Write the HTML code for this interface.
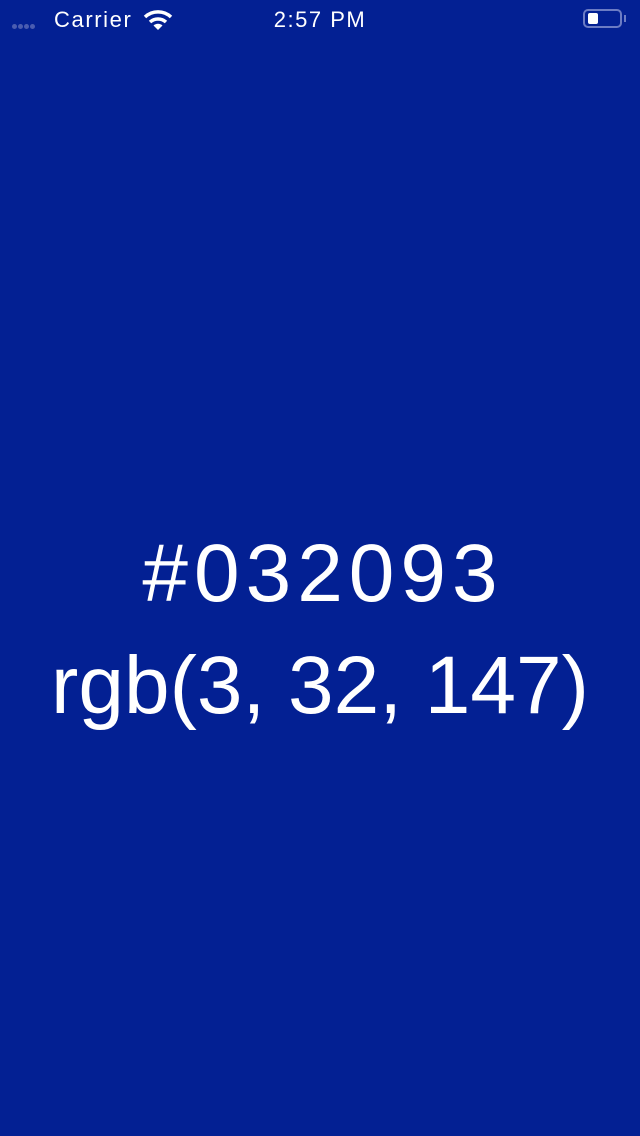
<!DOCTYPE html>
<html><head><style>
html,body{margin:0;padding:0;width:640px;height:1136px;background:#032093;overflow:hidden;font-family:"Liberation Sans",sans-serif;color:#fff;position:relative}
.t{position:absolute;left:0;width:640px;text-align:center;font-size:82px;line-height:1}
.d{position:absolute;top:24px;width:5px;height:5px;border-radius:50%;background:#4a5cb0}
</style></head><body>
<div class="d" style="left:12px"></div><div class="d" style="left:18px"></div><div class="d" style="left:24px"></div><div class="d" style="left:30px"></div>
<div style="position:absolute;left:54px;top:7px;font-size:22px;letter-spacing:1.6px">Carrier</div>
<svg style="position:absolute;left:143px;top:9px" width="30" height="22" viewBox="0 0 30 22"><path d="M2 8 A19 19 0 0 1 28 8" stroke="#fff" stroke-width="3.5" fill="none"/><path d="M7 13 A12 12 0 0 1 23 13" stroke="#fff" stroke-width="3.5" fill="none"/><path d="M15 21 L10.5 16.5 A6.5 6.5 0 0 1 19.5 16.5 Z" fill="#fff"/></svg>
<div style="position:absolute;left:0;width:640px;text-align:center;top:7px;font-size:22px;letter-spacing:1.5px">2:57 PM</div>
<div style="position:absolute;left:583px;top:9px;width:39px;height:19px;border:2px solid #6c7cc4;border-radius:5px;box-sizing:border-box"><div style="position:absolute;left:3px;top:2px;width:10px;height:11px;background:#fff;border-radius:2px"></div></div>
<div style="position:absolute;left:624px;top:15px;width:2px;height:7px;background:#6c7cc4"></div>
<div class="t" style="top:533px;letter-spacing:6px;padding-left:6px;box-sizing:border-box">#032093</div>
<div class="t" style="top:645px">rgb(3, 32, 147)</div>
</body></html>
